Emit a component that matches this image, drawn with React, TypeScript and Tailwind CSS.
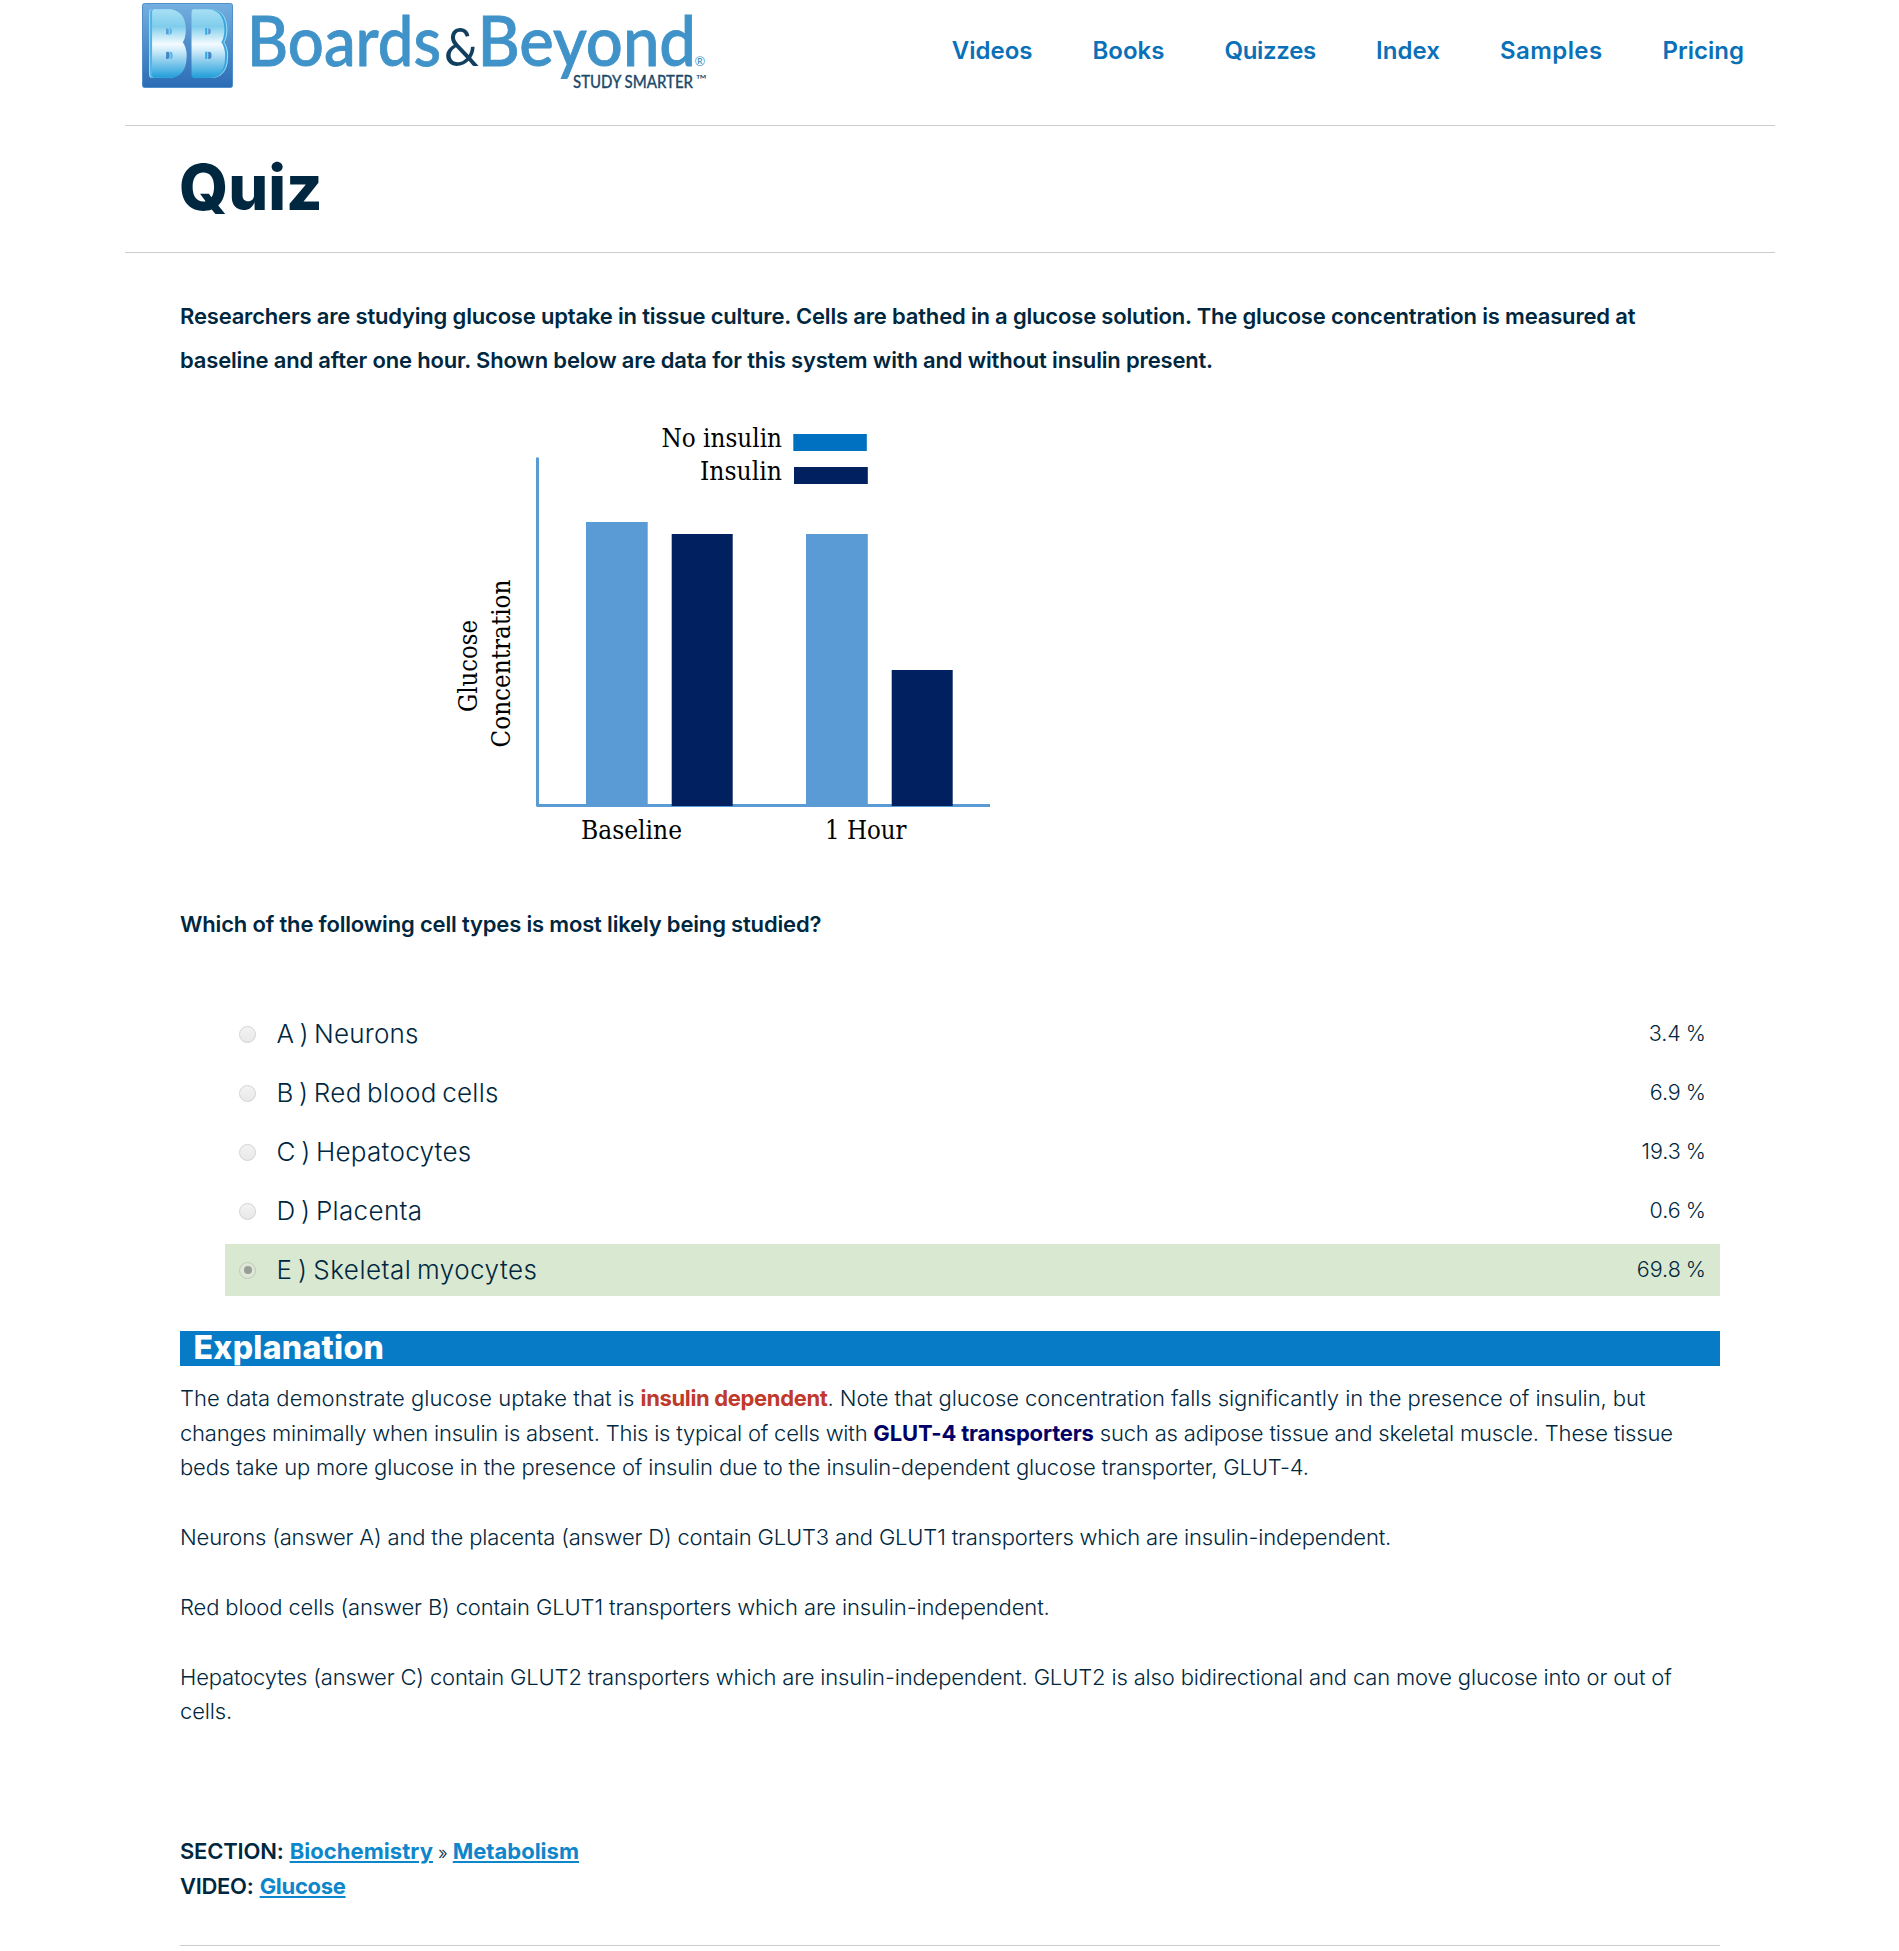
import type { ReactNode } from "react";

function Logo() {
  return (
    <svg className="block h-[92px] w-[590px] overflow-visible" viewBox="130 0 590 92" role="img" aria-label="Boards & Beyond">
      <defs>
        <linearGradient id="tile" x1="0" y1="0" x2="0" y2="1">
          <stop offset="0" stopColor="#74afe0" />
          <stop offset="1" stopColor="#2a6cb5" />
        </linearGradient>
        <linearGradient id="face" gradientUnits="userSpaceOnUse" x1="0" y1="9" x2="0" y2="79">
          <stop offset="0" stopColor="#a9e0f5" />
          <stop offset="0.25" stopColor="#7fcdec" />
          <stop offset="0.5" stopColor="#f4fbff" />
          <stop offset="0.62" stopColor="#c4e6f8" />
          <stop offset="1" stopColor="#189ad8" />
        </linearGradient>
      </defs>
      <rect x="142.5" y="3.5" width="90" height="84" rx="2" fill="url(#tile)" stroke="#4f8fce" strokeWidth="1" />
      <g fontFamily="Roboto, sans-serif" fontWeight="900" fontSize="86" strokeLinejoin="round" fill="url(#face)" stroke="url(#face)" strokeWidth="7.5">
        <text className="[filter:drop-shadow(-2px_0.5px_0_#4fb5e6)_drop-shadow(-1px_0_0_#a8dcf4)]" x="151.500" y="74" textLength="35" lengthAdjust="spacingAndGlyphs">B</text>
        <text className="[filter:drop-shadow(2.5px_0.5px_0_#38a6de)_drop-shadow(1.2px_0_0_#9fdcf4)]" x="191" y="74" textLength="34" lengthAdjust="spacingAndGlyphs">B</text>
      </g>
      <g fontFamily="Lato, sans-serif">
        <g fontSize="69" fontWeight="500" fill="#4093c8" stroke="#4093c8" strokeWidth="0.9">
          <text x="247" y="65.5" textLength="194" lengthAdjust="spacingAndGlyphs">Boards</text>
          <text x="477.500" y="65.5" textLength="218.500" lengthAdjust="spacingAndGlyphs">Beyond</text>
        </g>
        <text x="444" y="65.500" fontSize="53" textLength="35" lengthAdjust="spacingAndGlyphs" fill="#123f5e">&amp;</text>
        <text x="694.500" y="66" fontSize="13" fill="#4093c8">®</text>
        <text x="573" y="87.500" fontSize="17.500" fontWeight="500" textLength="120" lengthAdjust="spacingAndGlyphs" fill="#1d4b6c" stroke="#1d4b6c" strokeWidth="0.3">STUDY SMARTER</text>
        <text x="695.500" y="84" fontSize="13" textLength="11" lengthAdjust="spacingAndGlyphs" fill="#1d4b6c">™</text>
      </g>
    </svg>
  );
}

function GlucoseChart() {
  return (
    <svg className="block h-[520px] w-[900px]" viewBox="180 382 900 520" role="img" aria-label="Glucose concentration at baseline and after one hour">
      <g fill="#5b9bd5">
        <rect x="586" y="522" width="61.700" height="283" />
        <rect x="806" y="534" width="61.800" height="271" />
        <rect x="536" y="457.500" width="3" height="349" />
        <rect x="537" y="804" width="453" height="3" />
      </g>
      <g fill="#002060">
        <rect x="671.700" y="534" width="61" height="272" />
        <rect x="891.700" y="670" width="61" height="136" />
        <rect x="794" y="467" width="73.800" height="17" />
      </g>
      <rect x="793.300" y="434" width="73.500" height="17" fill="#0070c0" />
      <g fontFamily="'DejaVu Serif Condensed', 'DejaVu Serif', serif" fontSize="25.500" fontStretch="condensed" fill="#000">
        <text x="661.500" y="446.500" textLength="120.500" lengthAdjust="spacingAndGlyphs">No insulin</text>
        <text x="700" y="479.500" textLength="82" lengthAdjust="spacingAndGlyphs">Insulin</text>
        <text x="581" y="839" textLength="101" lengthAdjust="spacingAndGlyphs">Baseline</text>
        <text x="825" y="839" textLength="81.500" lengthAdjust="spacingAndGlyphs">1 Hour</text>
        <text transform="translate(477 712) rotate(-90)" textLength="92" lengthAdjust="spacingAndGlyphs">Glucose</text>
        <text transform="translate(510 747.500) rotate(-90)" textLength="168" lengthAdjust="spacingAndGlyphs">Concentration</text>
      </g>
    </svg>
  );
}

const nav = [
  { label: "Videos", cls: "tracking-[0px]" },
  { label: "Books", cls: "tracking-[0px]" },
  { label: "Quizzes", cls: "tracking-[-0.3px]" },
  { label: "Index", cls: "tracking-[0.1px]" },
  { label: "Samples", cls: "tracking-[0.4px]" },
  { label: "Pricing", cls: "tracking-[0px]" },
];

const answers = [
  { label: "A ) Neurons", share: "3.4 %", cls: "tracking-[0.2px]" },
  { label: "B ) Red blood cells", share: "6.9 %", cls: "tracking-[0.3px]" },
  { label: "C ) Hepatocytes", share: "19.3 %", cls: "tracking-[0.3px]" },
  { label: "D ) Placenta", share: "0.6 %", cls: "tracking-[0.35px]" },
  { label: "E ) Skeletal myocytes", share: "69.8 %", cls: "tracking-[0.5px]", correct: true },
];

function Radio({ checked }: { checked?: boolean }) {
  return (
    <span
      className={
        checked
          ? "flex h-[17px] w-[17px] items-center justify-center rounded-full border border-[#bfcab8] bg-[#dde6d7]"
          : "flex h-[17px] w-[17px] items-center justify-center rounded-full border border-[#d3d3d3] bg-linear-to-b from-[#f3f3f3] to-[#e8e8e8]"
      }
    >
      {checked && <span className="h-[8px] w-[8px] rounded-full bg-[#989e94]" />}
    </span>
  );
}

function Line({ children, className = "" }: { children?: ReactNode; className?: string }) {
  return <div className={`h-[34.85px] whitespace-pre ${className}`}>{children}</div>;
}

const link = "font-bold text-[#0d86cb] underline decoration-2 underline-offset-2";

export default function App() {
  return (
    <div className="h-[1951px] w-[1899px] overflow-hidden bg-white pl-[125px] font-['Inter',sans-serif] text-[#002740]">
      <div className="w-[1650px]">
        <header className="flex h-[126px] items-start justify-between border-b border-[#cccccc] pr-[31px] pl-[5px]">
          <Logo />
          <nav className="flex gap-[60px] pt-[31px] text-[24px] leading-[40px] font-semibold text-[#0a70b8]">
            {nav.map((n) => (
              <a key={n.label} className={n.cls}>{n.label}</a>
            ))}
          </nav>
        </header>

        <div className="h-[127px] border-b border-[#cccccc] pr-[55px] pl-[54px] pt-[25px]">
          <h1 className="text-[63px] leading-[72px] font-extrabold tracking-[0px]">Quiz</h1>
        </div>

        <main className="px-[55px] pt-[41px]">
          <div className="text-[22px] leading-[44px] font-semibold whitespace-pre">
            <div className="tracking-[-0.18px]">Researchers are studying glucose uptake in tissue culture. Cells are bathed in a glucose solution. The glucose concentration is measured at</div>
            <div className="tracking-[-0.17px]">baseline and after one hour. Shown below are data for this system with and without insulin present.</div>
          </div>
          <GlucoseChart />
          <div className="text-[22px] leading-[44px] font-semibold tracking-[-0.17px]">Which of the following cell types is most likely being studied?</div>

          <div className="mt-[62px] ml-[45px] flex flex-col gap-[7px]">
            {answers.map((a) => (
              <div key={a.label} className={a.correct ? "flex h-[52px] items-center bg-[#d9e8d0] pr-[14px] pl-[14px]" : "flex h-[52px] items-center pr-[14px] pl-[14px]"}>
                <Radio checked={a.correct} />
                <span className={`ml-[20.5px] text-[26px] leading-[52px] font-light [word-spacing:-2.2px] ${a.cls}`}>{a.label}</span>
                <span className="ml-auto pb-[2px] text-[21.5px] leading-[50px] font-light [word-spacing:-1px]">{a.share}</span>
              </div>
            ))}
          </div>

          <h2 className="mt-[35px] h-[35px] bg-[#087bc6] pl-[13.5px] text-[32px] leading-[33px] font-extrabold tracking-[0.3px] text-white">Explanation</h2>

          <div className="mt-[14.8px] text-[22px] leading-[34.85px] font-light">
            <Line>
              <span className="tracking-[0.02px]">The data demonstrate glucose uptake that is </span>
              <b className="font-bold tracking-[-0.35px] text-[#c0392b]">insulin dependent</b>
              <span className="tracking-[-0.06px]">. Note that glucose concentration falls significantly in the presence of insulin, but</span>
            </Line>
            <Line>
              <span className="tracking-[-0.22px]">changes minimally when insulin is absent. This is typical of cells with </span>
              <b className="font-bold tracking-[-0.16px] text-[#000066]">GLUT-4 transporters</b>
              <span className="tracking-[-0.17px]"> such as adipose tissue and skeletal muscle. These tissue</span>
            </Line>
            <Line className="tracking-[-0.15px]">beds take up more glucose in the presence of insulin due to the insulin-dependent glucose transporter, GLUT-4.</Line>
            <Line />
            <Line className="tracking-[-0.16px]">Neurons (answer A) and the placenta (answer D) contain GLUT3 and GLUT1 transporters which are insulin-independent.</Line>
            <Line />
            <Line className="tracking-[-0.13px]">Red blood cells (answer B) contain GLUT1 transporters which are insulin-independent.</Line>
            <Line />
            <Line className="tracking-[-0.15px]">Hepatocytes (answer C) contain GLUT2 transporters which are insulin-independent. GLUT2 is also bidirectional and can move glucose into or out of</Line>
            <Line className="tracking-[-0.15px]">cells.</Line>
            <Line />
            <Line />
            <Line />
            <Line>
              <b className="font-semibold tracking-[-0.2px]">SECTION:</b> <a className={`${link} tracking-[0.05px]`}>Biochemistry</a>
              <span className="text-[18px]"> » </span>
              <a className={link}>Metabolism</a>
            </Line>
            <Line>
              <b className="font-semibold tracking-[-0.3px]">VIDEO:</b> <a className={`${link} tracking-[-0.3px]`}>Glucose</a>
            </Line>
          </div>
          <div className="mt-[41.5px] border-t border-[#cccccc]" />
        </main>
      </div>
    </div>
  );
}
